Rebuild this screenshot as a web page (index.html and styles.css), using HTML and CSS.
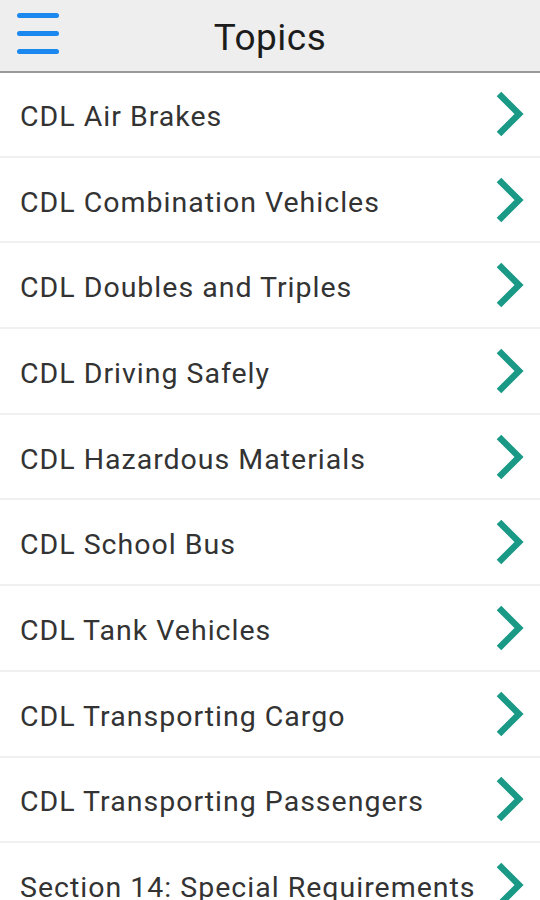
FILE: index.html
```html
<!DOCTYPE html>
<html lang="en">

<head>
    <meta charset="UTF-8">
    <title>Topics</title>
    <link rel="stylesheet" href="styles.css">
</head>

<body>
    <div id="header">
        <div class="menu">
            <span></span>
            <span></span>
            <span></span>
        </div>
        <h1>Topics</h1>
    </div>
    <ul id="topics">
        <li><span>CDL Air Brakes</span><svg class="arrow" viewBox="0 0 32 48"><polyline points="4,4 24,24 4,44" /></svg></li>
        <li><span>CDL Combination Vehicles</span><svg class="arrow" viewBox="0 0 32 48"><polyline points="4,4 24,24 4,44" /></svg></li>
        <li><span>CDL Doubles and Triples</span><svg class="arrow" viewBox="0 0 32 48"><polyline points="4,4 24,24 4,44" /></svg></li>
        <li><span>CDL Driving Safely</span><svg class="arrow" viewBox="0 0 32 48"><polyline points="4,4 24,24 4,44" /></svg></li>
        <li><span>CDL Hazardous Materials</span><svg class="arrow" viewBox="0 0 32 48"><polyline points="4,4 24,24 4,44" /></svg></li>
        <li><span>CDL School Bus</span><svg class="arrow" viewBox="0 0 32 48"><polyline points="4,4 24,24 4,44" /></svg></li>
        <li><span>CDL Tank Vehicles</span><svg class="arrow" viewBox="0 0 32 48"><polyline points="4,4 24,24 4,44" /></svg></li>
        <li><span>CDL Transporting Cargo</span><svg class="arrow" viewBox="0 0 32 48"><polyline points="4,4 24,24 4,44" /></svg></li>
        <li><span>CDL Transporting Passengers</span><svg class="arrow" viewBox="0 0 32 48"><polyline points="4,4 24,24 4,44" /></svg></li>
        <li><span>Section 14: Special Requirements</span><svg class="arrow" viewBox="0 0 32 48"><polyline points="4,4 24,24 4,44" /></svg></li>
    </ul>
</body>

</html>
```

FILE: styles.css
```css
* {
    margin: 0;
    padding: 0;
}

body {
    width: 540px;
    height: 900px;
    overflow: hidden;
    background-color: #fff;
    font-family: Roboto, "Noto Sans", sans-serif;
    color: #333;
}

#header {
    height: 71px;
    background-color: #eee;
    border-bottom: 2px solid #999;
    display: flex;
    align-items: center;
    justify-content: center;
    position: relative;
}

#header h1 {
    font-size: 37px;
    font-weight: normal;
    letter-spacing: 0.5px;
    padding-top: 4px;
    color: #1c1c1c;
}

.menu {
    position: absolute;
    left: 17px;
    top: 13px;
    width: 42px;
    display: flex;
    flex-direction: column;
    gap: 13px;
}

.menu span {
    display: block;
    height: 5px;
    border-radius: 3px;
    background-color: #1a88ee;
}

#topics {
    list-style: none;
}

#topics li {
    height: 85.7px;
    box-sizing: border-box;
    border-bottom: 2px solid #f0f0f0;
    padding: 5px 13px 0 20px;
    display: flex;
    align-items: center;
    justify-content: space-between;
    font-size: 28.5px;
    letter-spacing: 1px;
}

#topics li:first-child {
    height: 84.7px;
}

.arrow {
    width: 32px;
    height: 48px;
    margin-top: -5px;
    fill: none;
    stroke: #1a9a86;
    stroke-width: 6.5;
}
```
